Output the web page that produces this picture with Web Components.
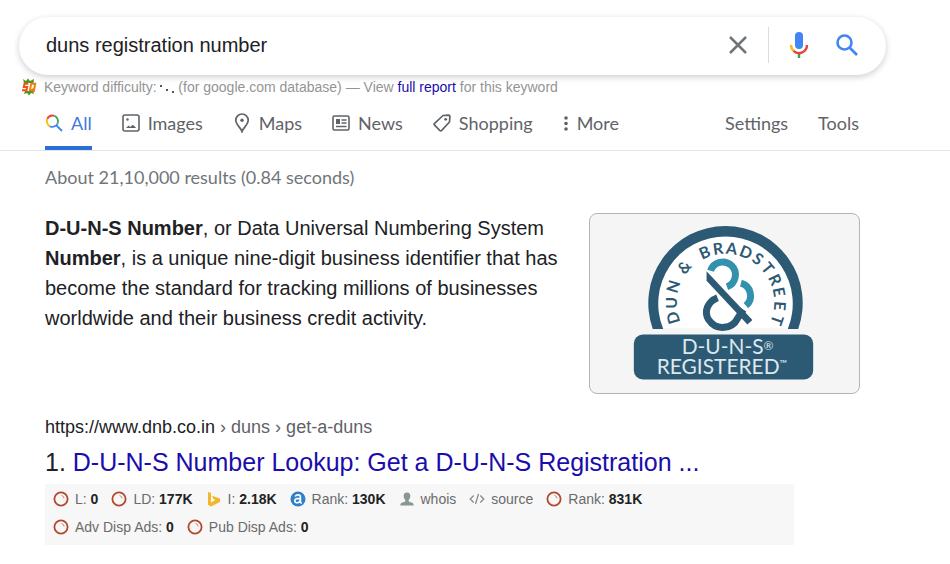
<!DOCTYPE html>
<html lang="en">
<head>
<meta charset="utf-8">
<meta name="viewport" content="width=device-width, initial-scale=1">
<title>duns registration number</title>
<style>
  body {
    margin: 0;
    background: #fff;
    color: #202124;
    font-family: "Liberation Sans", Arial, sans-serif;
  }
</style>
</head>
<body>
<search-page></search-page>

<script>
const icons = {
  all: `<svg width="18" height="18" viewBox="0 0 18 18" fill="none" stroke-width="1.800">
    <path d="M2.2 9.2A6 6 0 0 1 2.3 4.7" stroke="#fbbc04"/>
    <path d="M2.3 4.7A6 6 0 0 1 9.5 1.900" stroke="#ea4335"/>
    <path d="M9.5 1.900A6 6 0 0 1 12.600 9.600" stroke="#34a853"/>
    <path d="M2.2 9.2A6 6 0 0 0 5 12.400" stroke="#fbbc04"/>
    <path d="M5 12.400A6 6 0 0 0 12.600 9.600M11.500 11.500l5.500 5.500" stroke="#4285f4"/></svg>`,
  images: `<svg width="18" height="18" viewBox="0 0 18 18" fill="none" stroke="#5f6368" stroke-width="1.6">
    <rect x="1" y="1" width="16" height="16" rx="2"/>
    <path d="M4 14 6.500 11.500l1.700 1.500 2.700-2.300 3.300 3.300z" fill="#5f6368" stroke="none"/>
    <circle cx="5.500" cy="5.500" r="1.200" fill="#5f6368" stroke="none"/></svg>`,
  maps: `<svg width="18" height="20" viewBox="0 0 18 20" fill="none" stroke="#5f6368" stroke-width="1.7">
    <path d="M9 18.5C8 15 2.8 11.700 2.800 7.200a6.200 6.200 0 0 1 12.400 0C15.200 11.700 10 15 9 18.500z"/>
    <circle cx="9" cy="7.300" r="1.700" fill="#5f6368" stroke="none"/></svg>`,
  news: `<svg width="18" height="18" viewBox="0 0 18 18" fill="none" stroke="#5f6368" stroke-width="1.6">
    <rect x="1" y="2" width="16" height="14" rx="1.500"/>
    <path d="M9.500 6H14.500M9.500 9H14.500M4 12.500H14.500"/>
    <path d="M4 5h4v5H4z" fill="#5f6368" stroke="none"/></svg>`,
  shopping: `<svg width="18" height="18" viewBox="0 0 18 18" fill="none" stroke="#5f6368" stroke-width="1.700" stroke-linejoin="round">
    <path d="M10 1.500 15.500 1.200Q16.900 1.200 16.900 2.600L16.500 8 8.700 16.300Q7.700 17.300 6.700 16.300L1.600 11.200Q.700 10.200 1.600 9.300z"/>
    <circle cx="12.700" cy="5.300" r="1.400" fill="#5f6368" stroke="none"/></svg>`,
  more: `<svg width="6" height="16" viewBox="0 0 6 16" fill="#5f6368">
    <circle cx="3" cy="3" r="1.800"/><circle cx="3" cy="8.500" r="1.800"/><circle cx="3" cy="14" r="1.800"/></svg>`,
  ring: `<svg width="16" height="16" viewBox="0 0 16 16" fill="none">
    <circle cx="8" cy="8" r="6.600" stroke="#b5472e" stroke-width="1.800"/>
    <path d="M8.500 4.500q2.500.500 2.500 3" stroke="#c98a6a"/></svg>`,
  bing: `<svg width="16" height="16" viewBox="0 0 16 16">
    <path d="M2 1l3 1v9.500l4.500-2.600-2.200-1L6 4.800l8 2.800v3.300L5 15.500 2 13.800z" fill="#f2b82c"/></svg>`,
  alexa: `<svg width="16" height="16" viewBox="0 0 16 16" fill="none">
    <circle cx="8" cy="8" r="7.500" fill="#2f80c8"/>
    <path d="M5.200 5.500q.800-1.700 2.900-1.700 2.300 0 2.300 2.200v6M10.400 7.300q-5.600-.200-5.600 2.500c0 2.800 5.200 2.600 5.600-.600M10.400 12h1.500" stroke="#fff" stroke-width="1.700"/></svg>`,
  whois: `<svg width="16" height="16" viewBox="0 0 16 16" fill="#8a9693">
    <path d="M8 1.500c2.300 0 3.500 1.500 3.300 3.700-.1 1.700-.8 2.800-1.600 3.600v1.700l4 1.400q1 .500 1 2.600H1.300q0-2.100 1-2.600l4-1.400V8.800C5.500 8 4.800 6.900 4.700 5.200 4.500 3 5.700 1.500 8 1.500z"/></svg>`,
  source: `<svg width="16" height="16" viewBox="0 0 16 16" fill="none" stroke="#8a8a8a" stroke-width="1.300">
    <path d="M4.700 4.500 1.200 8l3.500 3.500M11.300 4.500 14.800 8l-3.500 3.500M9.500 3 6.500 13"/></svg>`
};

class SearchBox extends HTMLElement {
  constructor() {
    super();
    this.attachShadow({ mode: 'open' }).innerHTML = `
      <style>
        :host { display: block; }
        form {
          display: flex;
          align-items: center;
          height: 58px;
          box-sizing: border-box;
          padding: 0 21px 2px 27px;
          border-radius: 29px;
          background: #fff;
          box-shadow: 0 2px 6px rgba(32, 33, 36, .22);
        }
        input {
          flex: 1;
          min-width: 0;
          padding: 0;
          border: 0;
          outline: 0;
          background: none;
          color: #202124;
          font: 20px "Liberation Sans", Arial, sans-serif;
        }
        button {
          display: flex;
          align-items: center;
          justify-content: center;
          width: 36px;
          height: 36px;
          padding: 0;
          border: 0;
          background: none;
        }
        .voice {
          margin-left: 12px;
        }
        .go {
          margin-left: 12px;
        }
        .line {
          width: 1px;
          height: 36px;
          margin-left: 12px;
          background: #dadce0;
        }
      </style>
      <form>
        <input type="text" value="duns registration number" aria-label="Search">
        <button type="button" aria-label="Clear">
          <svg width="20" height="20" viewBox="0 0 20 20" stroke="#70757a" stroke-width="2.500"><path d="M2 2l16 16M18 2 2 18"/></svg>
        </button>
        <span class="line"></span>
        <button type="button" class="voice" aria-label="Search by voice">
          <svg width="20" height="28" viewBox="0 0 20 28" fill="none" stroke-width="2.400">
            <rect x="6" y="1" width="8" height="17" rx="4" fill="#4285f4"/>
            <path d="M10 21v6" stroke="#34a853"/>
            <path d="M2 14a8 8 0 0 0 2.500 5.800" stroke="#fbbc04"/>
            <path d="M4.500 19.800A8 8 0 0 0 18 14" stroke="#ea4335"/>
          </svg>
        </button>
        <button type="submit" class="go" aria-label="Search">
          <svg width="24" height="24" viewBox="0 0 24 24" fill="none" stroke="#4285f4" stroke-width="2.600">
            <circle cx="9.500" cy="9.500" r="7"/><path d="M14.500 14.500 22 22"/>
          </svg>
        </button>
      </form>
    `;
  }
}
customElements.define('search-box', SearchBox);

class KeywordBar extends HTMLElement {
  constructor() {
    super();
    this.attachShadow({ mode: 'open' }).innerHTML = `
      <style>
        :host {
          display: flex;
          align-items: center;
          gap: 7px;
          color: #949494;
          font-size: 14px;
          line-height: 18px;
          white-space: nowrap;
        }
        .dots { vertical-align: middle; }
        ::slotted(a) { color: #1a0dab; text-decoration: none; }
      </style>
      <svg width="16" height="18" viewBox="0 0 16 18" fill="none">
        <path d="M2 1l3 2 2-2.500L9 3l4-2-.500 4H3zM3 16l1-3h8l1 3-3-1-2 2.500L6 15z" fill="#4c9a1c"/>
        <path d="M7.300 5.700H3.500L2.800 8.900h3.400l-.700 3.400H1" stroke="#f0501c" stroke-width="2"/>
        <path d="M10.200 5.700h4L13 12.300H8.900zM11.500 10.500l1.800 3.500" stroke="#f57c14" stroke-width="2"/>
      </svg>
      <div>Keyword difficulty:
        <svg class="dots" width="14" height="10" viewBox="0 0 14 10" fill="#555"><path d="M0 2h2v2H0zM6 6h2v2H6zM12 8h2v2h-2z"/></svg>
        (for google.com database) — View <slot></slot> for this keyword</div>
    `;
  }
}
customElements.define('keyword-bar', KeywordBar);

class NavTab extends HTMLElement {
  constructor() {
    super();
    const icon = icons[this.getAttribute('icon')] || '';
    this.attachShadow({ mode: 'open' }).innerHTML = `
      <style>
        :host { display: block; }
        a {
          display: flex;
          align-items: center;
          gap: 8px;
          height: 50px;
          box-sizing: border-box;
          padding-bottom: 1px;
          border-bottom: 4px solid transparent;
          color: #5f6368;
          font: 18px/24px Lato, sans-serif;
          text-decoration: none;
        }
        :host([active]) a {
          color: #3f78dc;
          border-bottom-color: #2a6fd6;
        }
      </style>
      <a href="#">${icon}<slot></slot></a>
    `;
  }
}
customElements.define('nav-tab', NavTab);

class DunsBadge extends HTMLElement {
  constructor() {
    super();
    // letter, angle on the arch in degrees, half of the letter's width
    const letters = [
      ['D', -106, 6], ['U', -90, 6], ['N', -73, 6], [' ', -60, 2], ['&amp;', -49, 6], [' ', -36, 2],
      ['B', -23, 5], ['R', -8, 5], ['A', 7, 6], ['D', 22, 6], ['S', 37, 5], ['T', 51, 5],
      ['R', 65, 5], ['E', 79, 5], ['E', 94, 5], ['T', 109, 5]
    ];
    const x = [], y = [], turn = [];
    letters.forEach(([, angle, half]) => {
      const a = angle * Math.PI / 180;
      x.push((136 - half * Math.cos(a) + 49 * Math.sin(a)).toFixed(1));
      y.push((89 - half * Math.sin(a) - 49 * Math.cos(a)).toFixed(1));
      turn.push(angle);
    });
    this.attachShadow({ mode: 'open' }).innerHTML = `
      <style>
        :host {
          display: block;
          box-sizing: border-box;
          border: 1px solid #b4b4b4;
          border-radius: 8px;
          background: #f5f5f5;
          overflow: hidden;
        }
        svg { display: block; width: 100%; height: auto; }
        text { font-family: Lato, sans-serif; white-space: pre; }
      </style>
      <svg viewBox="0 0 270 180" fill="none">
        <path d="M68 115A72.500 72.500 0 1 1 204 115z" fill="#fff"/>
        <path d="M63 115.500A77.500 77.500 0 1 1 209 115.500H198.500A67.500 67.500 0 1 0 73.500 115.500z" fill="#2c5974"/>
        <text font-size="16" font-weight="700" fill="#2c5974" x="${x}" y="${y}" rotate="${turn}">${letters.map(l => l[0]).join('')}</text>
        <path d="M121 57A12.800 12.800 0 1 1 137.500 73M151.500 69.500A13 13 0 0 1 156.500 92" stroke="#3292ad" stroke-width="7"/>
        <path d="M128 84C118 88 114 98 119 106 127 118 143 115 148 105L154 96" stroke="#2c5974" stroke-width="7"/>
        <path d="M117 57.500V67L158 111 163 106.500z" fill="#2c5974"/>
        <rect x="44" y="121" width="180" height="45" rx="9" fill="#2c5974"/>
        <g fill="#dde8ee">
          <text x="92" y="141" font-size="21">D-U-N-S<tspan font-size="12" dy="-4">®</tspan></text>
          <text x="67" y="161" font-size="21">REGISTERED<tspan font-size="10" dy="-7">™</tspan></text>
        </g>
      </svg>
    `;
  }
}
customElements.define('duns-badge', DunsBadge);

class SeoItem extends HTMLElement {
  constructor() {
    super();
    this.attachShadow({ mode: 'open' }).innerHTML = `
      <style>
        :host {
          display: flex;
          align-items: center;
          gap: 6px;
          color: #6b6b6b;
          font-size: 14px;
          line-height: 28px;
          white-space: nowrap;
        }
        ::slotted(b) { color: #222; }
      </style>
      ${icons[this.getAttribute('icon')]}
      <span><slot></slot></span>
    `;
  }
}
customElements.define('seo-item', SeoItem);

class SearchResult extends HTMLElement {
  constructor() {
    super();
    this.attachShadow({ mode: 'open' }).innerHTML = `
      <style>
        :host { display: block; }
        .url { font-size: 18px; line-height: 24px; color: #5f6368; }
        h3 {
          margin: 4px 0 3px;
          font-size: 25px;
          font-weight: 400;
          line-height: 38px;
        }
        .seo {
          display: flex;
          flex-wrap: wrap;
          column-gap: 13px;
          max-width: 749px;
          box-sizing: border-box;
          padding: 1px 140px 4px 8px;
          background: #f7f7f7;
        }
      </style>
      <div class="url"><slot name="url"></slot></div>
      <h3><slot name="title"></slot></h3>
      <div class="seo"><slot></slot></div>
    `;
  }
}
customElements.define('search-result', SearchResult);

class SearchPage extends HTMLElement {
  constructor() {
    super();
    this.attachShadow({ mode: 'open' }).innerHTML = `
      <style>
        :host { display: block; padding-top: 17px; }
        search-box { max-width: 867px; margin: 0 19px; }
        keyword-bar { margin: 3px 20px 0 21px; }
        nav { border-bottom: 1px solid #e4e4e4; margin-top: 4px; }
        .tabs {
          display: flex;
          gap: 30px;
          max-width: 814px;
          margin: 0 45px;
        }
        .push { margin-left: auto; }
        main { max-width: 815px; margin: 0 45px; }
        .stats {
          padding: 14px 0 24px;
          color: #70757a;
          font: 18px/24px Lato, sans-serif;
        }
        .answer {
          display: flex;
          justify-content: space-between;
          align-items: flex-start;
          gap: 24px;
          margin-bottom: 21px;
        }
        .answer p {
          flex: 1;
          margin: 0;
          max-width: 520px;
          font-size: 20px;
          line-height: 30px;
        }
        duns-badge { width: 271px; flex: none; }
        .host { color: #202124; }
        .title { color: #1a0dab; text-decoration: none; }
      </style>
      <search-box></search-box>
      <keyword-bar><a href="#">full report</a></keyword-bar>
      <nav>
        <div class="tabs">
          <nav-tab icon="all" active>All</nav-tab>
          <nav-tab icon="images">Images</nav-tab>
          <nav-tab icon="maps">Maps</nav-tab>
          <nav-tab icon="news">News</nav-tab>
          <nav-tab icon="shopping">Shopping</nav-tab>
          <nav-tab icon="more">More</nav-tab>
          <nav-tab class="push">Settings</nav-tab>
          <nav-tab>Tools</nav-tab>
        </div>
      </nav>
      <main>
        <div class="stats">About 21,10,000 results (0.84 seconds)</div>
        <div class="answer">
          <p><b>D-U-N-S Number</b>, or Data Universal Numbering System <b>Number</b>, is a unique nine-digit business identifier that has become the standard for tracking millions of businesses worldwide and their business credit activity.</p>
          <duns-badge></duns-badge>
        </div>
        <search-result>
          <span slot="url"><span class="host">https://www.dnb.co.in</span> › duns › get-a-duns</span>
          <span slot="title">1. <a class="title" href="#">D-U-N-S Number Lookup: Get a D-U-N-S Registration ...</a></span>
          <seo-item icon="ring">L: <b>0</b></seo-item>
          <seo-item icon="ring">LD: <b>177K</b></seo-item>
          <seo-item icon="bing">I: <b>2.18K</b></seo-item>
          <seo-item icon="alexa">Rank: <b>130K</b></seo-item>
          <seo-item icon="whois">whois</seo-item>
          <seo-item icon="source">source</seo-item>
          <seo-item icon="ring">Rank: <b>831K</b></seo-item>
          <seo-item icon="ring">Adv Disp Ads: <b>0</b></seo-item>
          <seo-item icon="ring">Pub Disp Ads: <b>0</b></seo-item>
        </search-result>
      </main>
    `;
  }
}
customElements.define('search-page', SearchPage);
</script>
</body>
</html>
